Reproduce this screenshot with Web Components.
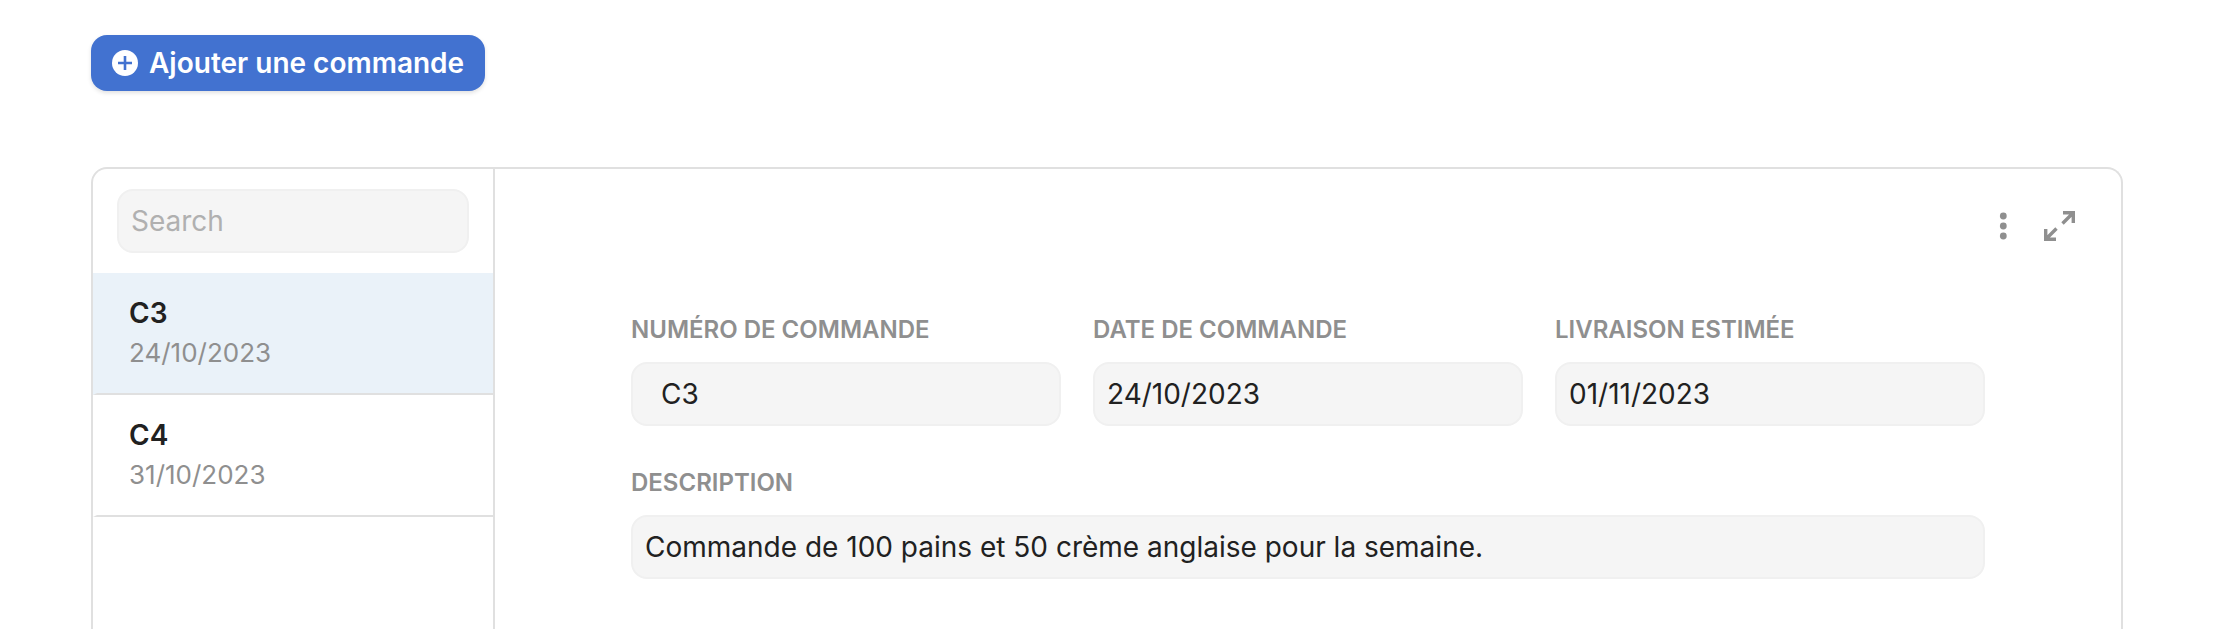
<!DOCTYPE html>
<html lang="fr">
<head>
  <meta charset="utf-8">
  <meta name="viewport" content="width=device-width, initial-scale=1">
  <title>Commandes</title>
  <style>
    body {
      margin: 0;
      background-color: #fff;
      color: #212121;
      font-family: Inter, "Liberation Sans", sans-serif;
      font-size: 28px;
    }
  </style>
</head>
<body>
  <orders-page>
    <add-button slot="actions">Ajouter une commande</add-button>
    <order-list slot="list">
      <order-item date="24/10/2023" selected>C3</order-item>
      <order-item date="31/10/2023">C4</order-item>
    </order-list>
    <order-detail slot="detail">
      <form-field label="Numéro de commande" value="C3" indent></form-field>
      <form-field label="Date de commande" value="24/10/2023"></form-field>
      <form-field label="Livraison estimée" value="01/11/2023"></form-field>
      <form-field label="Description" value="Commande de 100 pains et 50 crème anglaise pour la semaine." wide></form-field>
    </order-detail>
  </orders-page>

  <script>
    // shared by the search box and the form fields
    const inputStyle = `
      input {
        display: block;
        box-sizing: border-box;
        width: 100%;
        height: 64px;
        margin: 0;
        padding: 0 12px;
        border: 2px solid #f0f0f0;
        border-radius: 16px;
        background-color: #f5f5f5;
        color: #212121;
        font-family: inherit;
        font-size: 28px;
      }

      input::placeholder {
        color: #b0b0b0;
        opacity: 1;
      }
    `;

    class OrdersPage extends HTMLElement {
      constructor() {
        super();
        this.shadowDOM = this.attachShadow({ mode: "open" });
      }

      connectedCallback() {
        this.shadowDOM.innerHTML = `
          <style>
            :host {
              display: flex;
              flex-direction: column;
              gap: 76px;
              box-sizing: border-box;
              height: 100vh;
              padding: 35px 111px 0 91px;
              overflow: hidden;
            }

            main {
              display: flex;
              flex: 1;
              min-height: 0;
              border: 2px solid #e0e0e0;
              border-bottom: none;
              border-radius: 16px 16px 0 0;
            }
          </style>
          <header><slot name="actions"></slot></header>
          <main>
            <slot name="list"></slot>
            <slot name="detail"></slot>
          </main>
        `;
      }
    }

    class AddButton extends HTMLElement {
      constructor() {
        super();
        this.shadowDOM = this.attachShadow({ mode: "open" });
      }

      connectedCallback() {
        this.shadowDOM.innerHTML = `
          <style>
            :host {
              display: flex;
            }

            button {
              display: flex;
              align-items: center;
              gap: 11px;
              height: 56px;
              padding: 0 21px;
              border: none;
              border-radius: 16px;
              background-color: #4272d0;
              box-shadow: 0 2px 4px rgba(0, 0, 0, 0.12);
              color: #fff;
              font-family: inherit;
              font-size: 28px;
              font-weight: 600;
              white-space: nowrap;
              cursor: pointer;
            }
          </style>
          <button type="button">
            <svg width="26" height="26" viewBox="0 0 26 26" aria-hidden="true">
              <circle cx="13" cy="13" r="13" fill="#fff"/>
              <path d="M13 6v14M6 13h14" stroke="#4272d0" stroke-width="2.6"/>
            </svg>
            <slot></slot>
          </button>
        `;
      }
    }

    class OrderList extends HTMLElement {
      constructor() {
        super();
        this.shadowDOM = this.attachShadow({ mode: "open" });
      }

      connectedCallback() {
        this.shadowDOM.innerHTML = `
          <style>
            ${inputStyle}

            :host {
              display: block;
              flex: none;
              box-sizing: border-box;
              width: 402px;
              border-right: 2px solid #e0e0e0;
            }

            .search {
              padding: 20px 24px;
            }
          </style>
          <div class="search">
            <input type="text" placeholder="Search" aria-label="Search">
          </div>
          <nav><slot></slot></nav>
        `;
      }
    }

    class OrderItem extends HTMLElement {
      constructor() {
        super();
        this.shadowDOM = this.attachShadow({ mode: "open" });
      }

      connectedCallback() {
        this.shadowDOM.innerHTML = `
          <style>
            :host {
              display: block;
            }

            button {
              display: flex;
              flex-direction: column;
              justify-content: center;
              box-sizing: border-box;
              width: 100%;
              height: 122px;
              padding: 0 32px;
              border: 0 solid transparent;
              border-left-width: 4px;
              border-bottom: 2px solid #e0e0e0;
              background-color: #fff;
              color: #212121;
              font-family: inherit;
              text-align: left;
              cursor: pointer;
            }

            :host([selected]) button {
              background-color: #eaf2f9;
            }

            .name {
              font-size: 28px;
              font-weight: 600;
              line-height: 40px;
            }

            .date {
              color: #8f8f8f;
              font-size: 26px;
              line-height: 40px;
            }
          </style>
          <button type="button">
            <span class="name"><slot></slot></span>
            <span class="date">${this.getAttribute("date")}</span>
          </button>
        `;
      }
    }

    class OrderDetail extends HTMLElement {
      constructor() {
        super();
        this.shadowDOM = this.attachShadow({ mode: "open" });
      }

      connectedCallback() {
        this.shadowDOM.innerHTML = `
          <style>
            :host {
              display: block;
              flex: 1;
              min-width: 0;
            }

            .toolbar {
              display: flex;
              justify-content: flex-end;
              gap: 24px;
              padding: 41px 46px 70px;
            }

            .toolbar button {
              width: 32px;
              height: 32px;
              padding: 0;
              border: none;
              background: none;
              color: #8f8f8f;
              cursor: pointer;
            }

            svg {
              display: block;
            }

            form {
              display: grid;
              grid-template-columns: repeat(3, 1fr);
              gap: 39px 32px;
              padding: 0 136px;
            }
          </style>
          <div class="toolbar">
            <button type="button" aria-label="Options">
              <svg width="32" height="32" viewBox="0 0 32 32" fill="currentColor">
                <circle cx="16.300" cy="6" r="3.4"/>
                <circle cx="16.300" cy="16" r="3.4"/>
                <circle cx="16.300" cy="26" r="3.4"/>
              </svg>
            </button>
            <button type="button" aria-label="Agrandir">
              <svg width="32" height="32" viewBox="0 0 32 32" fill="none" stroke="currentColor" stroke-width="3.4">
                <path d="M20 2.7h10.3V13M30 3L19.5 13.5"/>
                <path d="M13 29.3H2.7V19M3 29l10.500-10.500"/>
              </svg>
            </button>
          </div>
          <form><slot></slot></form>
        `;
      }
    }

    class FormField extends HTMLElement {
      constructor() {
        super();
        this.shadowDOM = this.attachShadow({ mode: "open" });
      }

      connectedCallback() {
        this.shadowDOM.innerHTML = `
          <style>
            ${inputStyle}

            :host {
              display: block;
              min-width: 0;
            }

            :host([wide]) {
              grid-column: 1 / -1;
            }

            :host([indent]) input {
              padding-left: 28px;
            }

            label {
              display: block;
              margin-bottom: 14px;
              color: #8f8f8f;
              font-size: 24px;
              font-weight: 600;
              line-height: 36px;
              text-transform: uppercase;
              white-space: nowrap;
            }
          </style>
          <label for="field">${this.getAttribute("label")}</label>
          <input type="text" id="field" value="${this.getAttribute("value")}">
        `;
      }
    }

    customElements.define("orders-page", OrdersPage);
    customElements.define("add-button", AddButton);
    customElements.define("order-list", OrderList);
    customElements.define("order-item", OrderItem);
    customElements.define("order-detail", OrderDetail);
    customElements.define("form-field", FormField);
  </script>
</body>
</html>
